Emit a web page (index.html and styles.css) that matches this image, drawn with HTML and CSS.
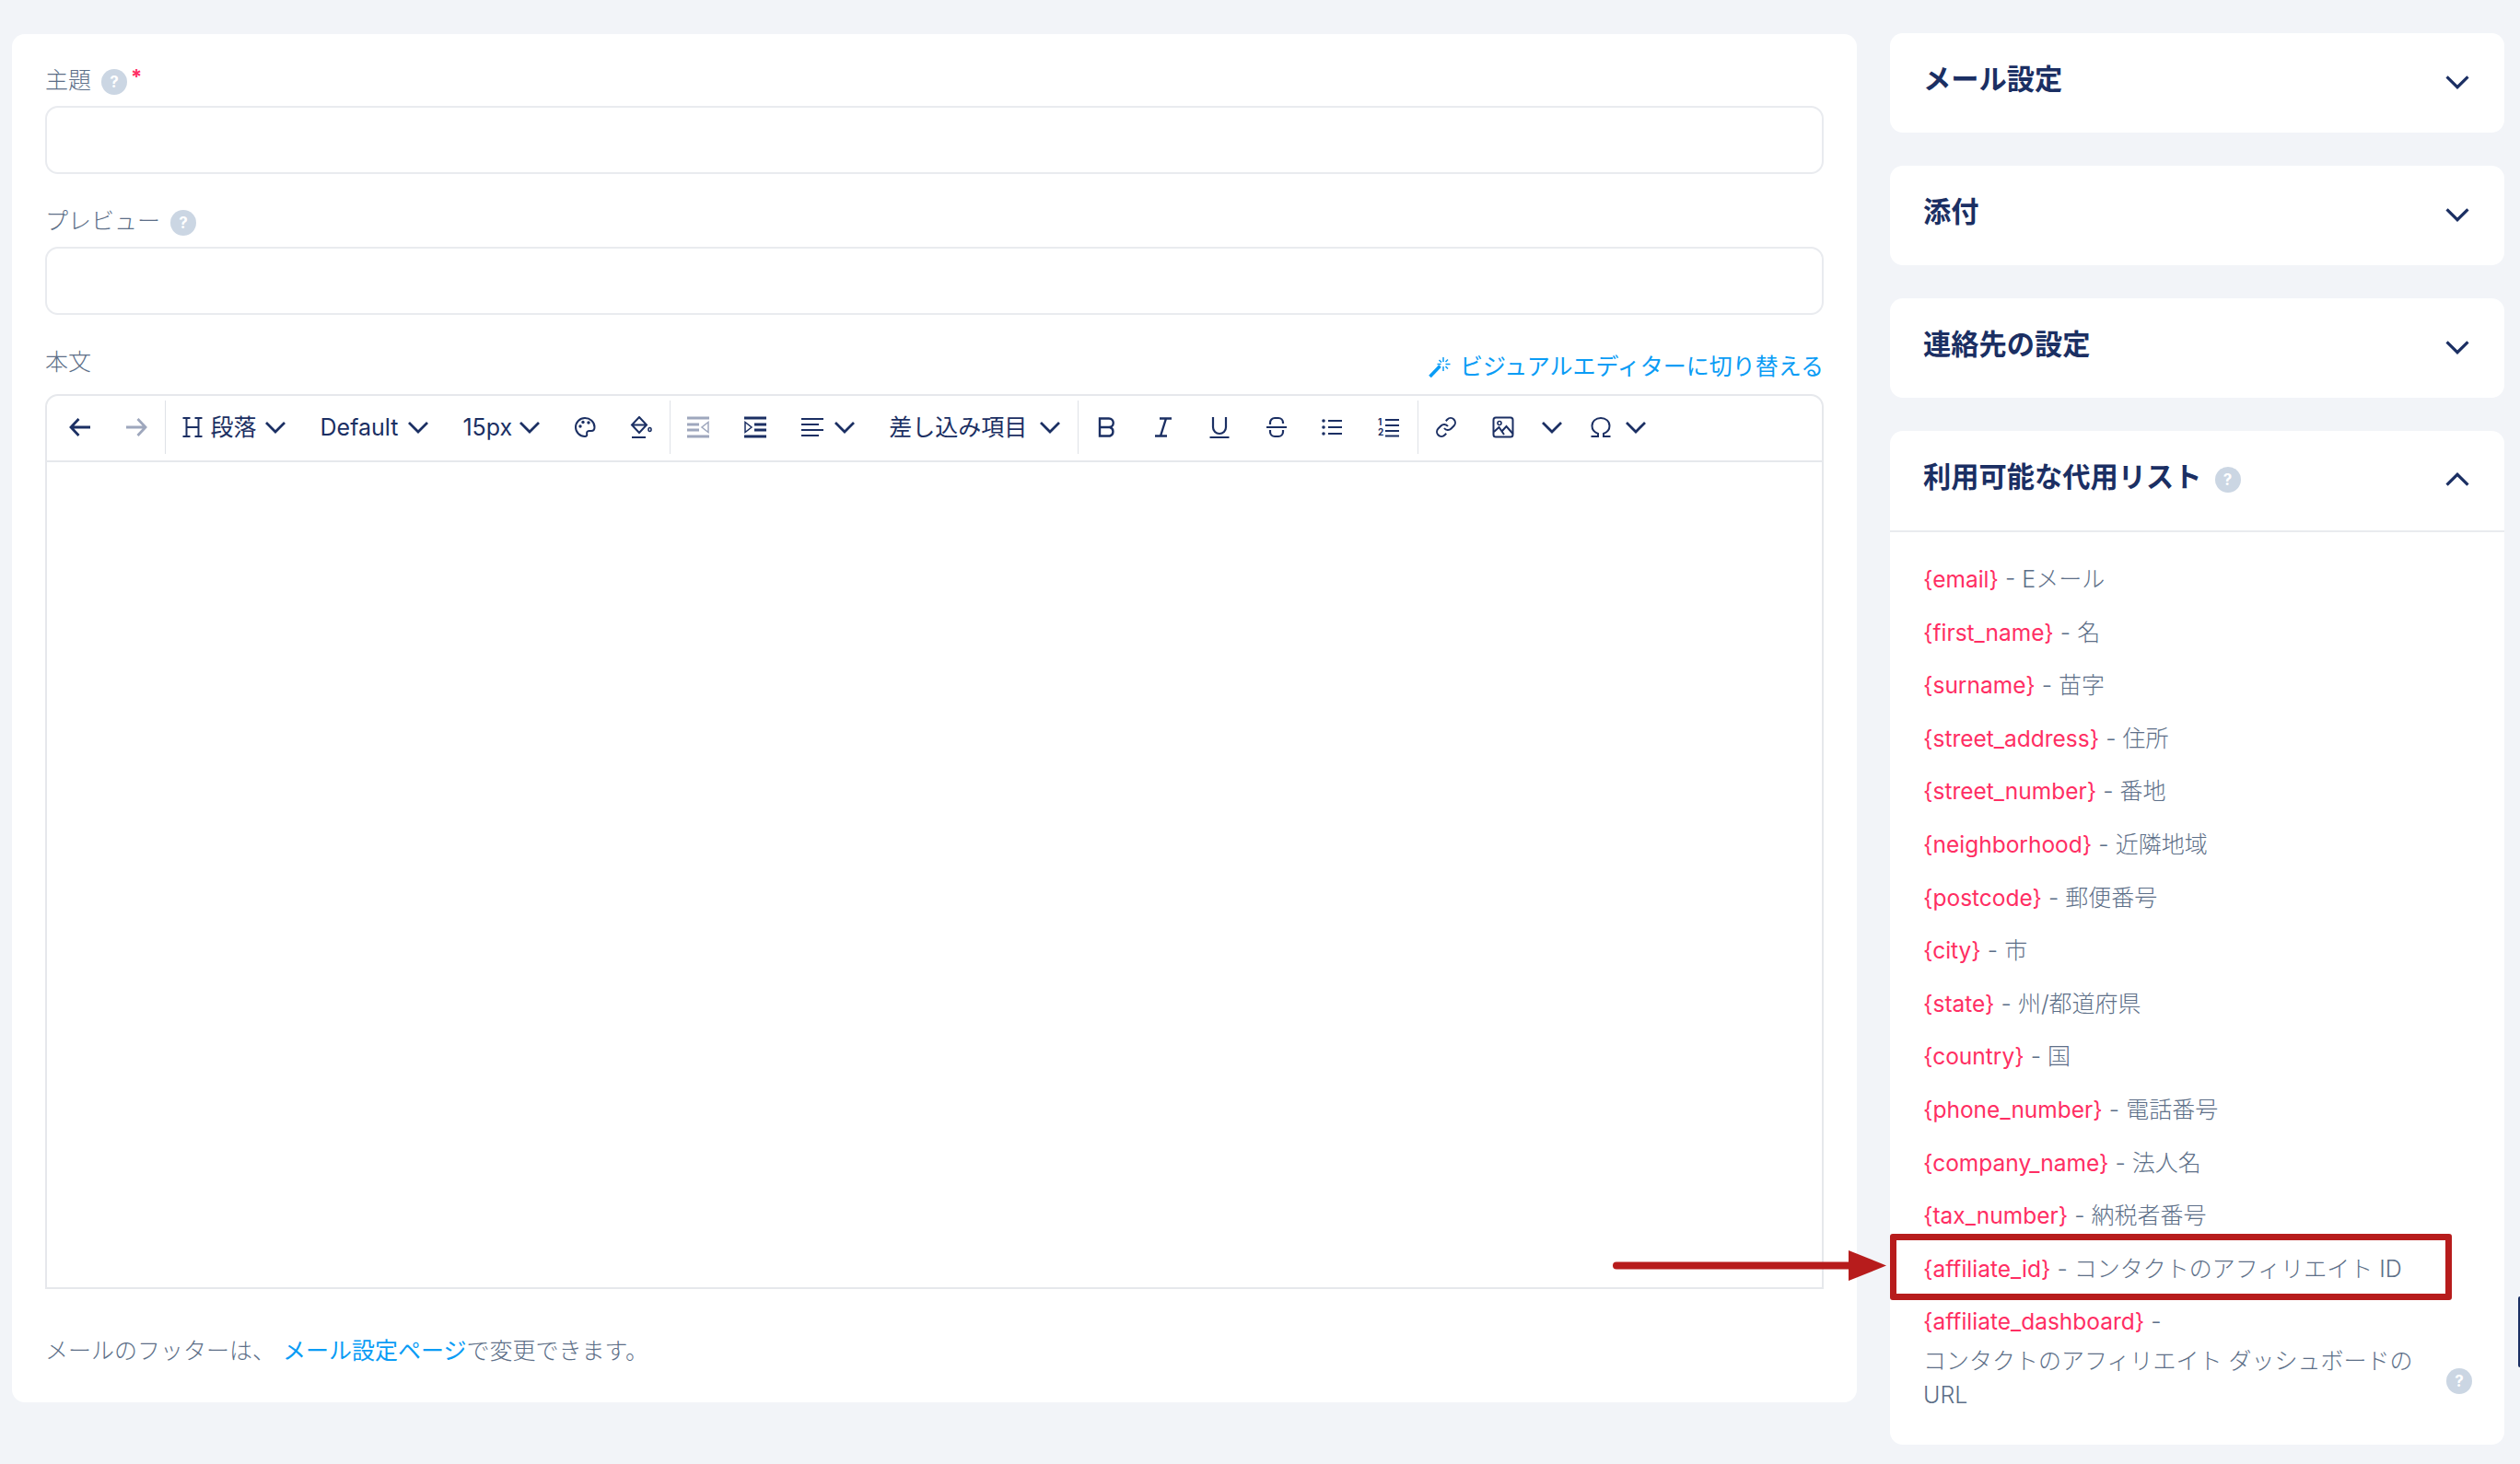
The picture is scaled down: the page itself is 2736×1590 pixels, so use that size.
FILE: index.html
```html
<!DOCTYPE html>
<html lang="ja">
<head>
  <meta charset="UTF-8">
  <title>メール設定</title>
  <link rel="stylesheet" href="styles.css">
</head>
<body>
  <div class="page">
    <main class="main-card">
      <div class="field-label">主題 <span class="help">?</span><span class="required">*</span></div>
      <input class="text-input" type="text">

      <div class="field-label spaced">プレビュー <span class="help">?</span></div>
      <input class="text-input" type="text">

      <div class="body-head">
        <div class="field-label">本文</div>
        <a class="switch-link" href="#">
          <svg class="wand" viewBox="0 0 25 23"><path d="M1.500 22L12.500 10.500" stroke-width="3.600"/><path d="M16 1v5M16 11v5M9.500 8.500h4M18.500 8.500h5M11.500 4l2.500 2.500M21 3.500L18.500 6M18.500 11l2.500 2.500" stroke-width="1.500"/></svg>
          ビジュアルエディターに切り替える
        </a>
      </div>

      <div class="editor">
        <div class="toolbar">
          <button class="tool"><svg class="ico" viewBox="0 0 24 24"><path d="M23 12H2M10.500 3L2 12l8.500 9"/></svg></button>
          <button class="tool muted"><svg class="ico" viewBox="0 0 24 24"><path d="M1 12h21M13.500 3l8.500 9-8.500 9"/></svg></button>
          <span class="sep"></span>
          <button class="menu first">
            <svg class="ico" viewBox="0 0 24 24"><path d="M5.500 2v20M18.500 2v20M5.500 12h13M1.500 2h8M14.500 2h8M1.500 22h8M14.500 22h8" stroke-width="2"/></svg>
            <span class="menu-text">段落</span>
            <svg class="chev" viewBox="0 0 24 14"><path d="M2 2l10 10L22 2"/></svg>
          </button>
          <button class="menu"><span class="menu-text">Default</span><svg class="chev" viewBox="0 0 24 14"><path d="M2 2l10 10L22 2"/></svg></button>
          <button class="menu size"><span class="menu-text">15px</span><svg class="chev" viewBox="0 0 24 14"><path d="M2 2l10 10L22 2"/></svg></button>
          <button class="tool"><svg class="ico" viewBox="0 0 24 24"><path d="M12 2a10 10 0 0 0 0 20c2 0 2.500-1.300 2.200-2.600-.4-1.700.3-3.400 2.200-3.400h2.600c2.300 0 3.500-1.500 3.500-4C22.500 6 17.500 2 12 2z" stroke-width="2"/><circle class="dot" cx="7" cy="11" r="1.700"/><circle class="dot" cx="10" cy="6.500" r="1.700"/><circle class="dot" cx="16" cy="7" r="1.700"/></svg></button>
          <button class="tool"><svg class="ico" viewBox="0 0 24 24"><path d="M10 1l8 8.500-8 8.500-8-8.500zM2 9.500h16M2 23h15" stroke-width="2"/><ellipse cx="21.500" cy="14.500" rx="1.500" ry="2" stroke-width="1.600"/></svg></button>
          <span class="sep"></span>
          <button class="tool muted"><svg class="ico" viewBox="0 0 24 24"><path d="M0 2h24M0 22h24M0 9h13M0 15h13"/><path class="solid" d="M23 6.500v11L16 12z" stroke-width="1.500"/></svg></button>
          <button class="tool"><svg class="ico" viewBox="0 0 24 24"><path d="M0 2h24M0 22h24M11 9h13M11 15h13"/><path class="solid" d="M1 6.500v11L8 12z" stroke-width="1.500"/></svg></button>
          <button class="menu align">
            <svg class="ico" viewBox="0 0 24 24"><path d="M0 3h24M0 9h19M0 15h24M0 21h19" stroke-width="1.800"/></svg>
            <svg class="chev" viewBox="0 0 24 14"><path d="M2 2l10 10L22 2"/></svg>
          </button>
          <button class="menu wide"><span class="menu-text">差し込み項目</span><svg class="chev" viewBox="0 0 24 14"><path d="M2 2l10 10L22 2"/></svg></button>
          <span class="sep"></span>
          <button class="tool"><svg class="ico" viewBox="0 0 24 24"><path d="M4 2.500h10a4.700 4.700 0 0 1 0 9.500H4zM4 12h11a5 5 0 0 1 0 9.500H4z" stroke-width="2.400"/></svg></button>
          <button class="tool"><svg class="ico" viewBox="0 0 24 24"><path d="M8 2.500h13M3 21.500h13M15 2.500L9 21.500" stroke-width="2.400"/></svg></button>
          <button class="tool"><svg class="ico" viewBox="0 0 24 24"><path d="M5 1v11a7 7 0 0 0 14 0V1M1.500 23h21" stroke-width="2.200"/></svg></button>
          <button class="tool"><svg class="ico" viewBox="0 0 24 24"><path d="M1 12h22M5 9V7a5 5 0 0 1 5-5h4a5 5 0 0 1 5 5v1M5 15v2a5 5 0 0 0 5 5h4a5 5 0 0 0 5-5v-2" stroke-width="2.200"/></svg></button>
          <button class="tool"><svg class="ico" viewBox="0 0 24 24"><path d="M7 5h15M7 12h15M7 19h15" stroke-width="1.800"/><circle class="dot" cx="2" cy="5" r="1.800"/><circle class="dot" cx="2" cy="12" r="1.800"/><circle class="dot" cx="2" cy="19" r="1.800"/></svg></button>
          <button class="tool"><svg class="ico" viewBox="0 0 24 24"><path d="M8 4h15M8 10h15M8 16h15M8 21.500h15" stroke-width="1.800"/><text class="num" x="0" y="10">1</text><text class="num" x="0" y="21">2</text></svg></button>
          <span class="sep"></span>
          <button class="tool"><svg class="ico" viewBox="0 0 24 24"><path d="M10 13a5 5 0 0 0 7.540.540l3-3a5 5 0 0 0-7.070-7.070l-1.720 1.710M14 11a5 5 0 0 0-7.540-.540l-3 3a5 5 0 0 0 7.070 7.070l1.710-1.710" stroke-width="2"/></svg></button>
          <button class="tool"><svg class="ico" viewBox="0 0 24 24"><rect x="1.500" y="1.500" width="21" height="21" rx="2.500" stroke-width="2"/><circle cx="8" cy="7.500" r="2" stroke-width="1.600"/><path d="M2 17l5.500-5 5.500 8M10.500 16.500l5-5.500 7 8" stroke-width="2"/></svg></button>
          <button class="tool-chev"><svg class="chev" viewBox="0 0 24 14"><path d="M2 2l10 10L22 2"/></svg></button>
          <button class="menu omega">
            <svg class="ico small" viewBox="0 0 24 24"><path d="M1.500 22H9v-3C5 17.500 2.500 14 2.500 10.500 2.500 5.500 6.500 2 12 2s9.500 3.500 9.500 8.500c0 3.500-2.500 7-6.500 8.500v3h7.500" stroke-width="2"/></svg>
            <svg class="chev" viewBox="0 0 24 14"><path d="M2 2l10 10L22 2"/></svg>
          </button>
        </div>
        <div class="editor-area"></div>
      </div>

      <p class="footer-note">メールのフッターは、 <a href="#">メール設定ページ</a>で変更できます。</p>
    </main>

    <aside class="side">
      <section class="side-card">
        <header class="side-head"><h3>メール設定</h3><svg class="chev head-chev" viewBox="0 0 24 14"><path d="M2 2l10 10L22 2"/></svg></header>
      </section>
      <section class="side-card">
        <header class="side-head"><h3>添付</h3><svg class="chev head-chev" viewBox="0 0 24 14"><path d="M2 2l10 10L22 2"/></svg></header>
      </section>
      <section class="side-card">
        <header class="side-head"><h3>連絡先の設定</h3><svg class="chev head-chev" viewBox="0 0 24 14"><path d="M2 2l10 10L22 2"/></svg></header>
      </section>
      <section class="side-card">
        <header class="side-head open"><h3>利用可能な代用リスト <span class="help">?</span></h3><svg class="chev head-chev" viewBox="0 0 24 14"><path d="M2 12L12 2l10 10"/></svg></header>
        <ul class="tags">
          <li><code>{email}</code> - Eメール</li>
          <li><code>{first_name}</code> - 名</li>
          <li><code>{surname}</code> - 苗字</li>
          <li><code>{street_address}</code> - 住所</li>
          <li><code>{street_number}</code> - 番地</li>
          <li><code>{neighborhood}</code> - 近隣地域</li>
          <li><code>{postcode}</code> - 郵便番号</li>
          <li><code>{city}</code> - 市</li>
          <li><code>{state}</code> - 州/都道府県</li>
          <li><code>{country}</code> - 国</li>
          <li><code>{phone_number}</code> - 電話番号</li>
          <li><code>{company_name}</code> - 法人名</li>
          <li><code>{tax_number}</code> - 納税者番号</li>
          <li><code>{affiliate_id}</code> - コンタクトのアフィリエイト ID</li>
          <li class="tag-long">
            <div class="tag-text"><code>{affiliate_dashboard}</code> - <span class="tag-desc">コンタクトのアフィリエイト ダッシュボードの URL</span></div>
            <span class="help">?</span>
          </li>
        </ul>
      </section>
    </aside>

    <!-- annotation drawn on top of the screenshot -->
    <div class="mark-box"></div>
    <svg class="mark-arrow" viewBox="0 0 297 33"><path d="M4 16.500H258" stroke-width="8" stroke-linecap="round"/><path class="head" d="M256 0l41 16.500L256 33z"/></svg>
    <div class="edge-tab"></div>
  </div>
</body>
</html>
```

FILE: styles.css
```css
* {
  margin: 0;
  padding: 0;
  box-sizing: border-box;
}

html, body {
  height: 100%;
  overflow: hidden;
}

body {
  font-family: Inter, 'Noto Sans CJK JP', sans-serif;
  font-size: 25px;
  line-height: 38.5px;
  font-weight: 300;
  color: #5d6f88;
  background-color: #f2f4f8;
}

a {
  color: #0a9cf5;
  text-decoration: none;
}

.page {
  position: relative;
  display: flex;
  align-items: flex-start;
  gap: 36px;
  height: 1590px;
  padding: 37px 17px 0 13px;
}

/* left card */

.main-card {
  width: 2003px;
  padding: 30px 36px 36px 36px;
  background-color: #fff;
  border-radius: 14px;
}

.field-label {
  display: flex;
  align-items: center;
  gap: 11px;
  height: 40px;
  line-height: 40px;
}

.field-label.spaced {
  margin-top: 31px;
}

.field-label .help {
  margin-top: 3px;
}

.help {
  display: inline-block;
  flex: none;
  width: 28px;
  height: 28px;
  border-radius: 50%;
  background-color: #cbd6e3;
  color: #fff;
  font-size: 17px;
  font-weight: 700;
  line-height: 28px;
  text-align: center;
}

.required {
  margin: -8px 0 0 -7px;
  color: #ff2e63;
  font-size: 22px;
  font-weight: 700;
}

.text-input {
  display: block;
  width: 100%;
  height: 74px;
  margin-top: 8px;
  border: 2px solid #e9ebef;
  border-radius: 14px;
  background-color: #fff;
}

.body-head {
  display: flex;
  justify-content: space-between;
  margin-top: 31px;
}

.switch-link {
  display: flex;
  align-items: center;
  gap: 9px;
  align-self: flex-end;
  height: 30px;
  font-weight: 400;
}

.wand {
  width: 25px;
  height: 23px;
  fill: none;
  stroke: #0a9cf5;
}

.editor {
  display: flex;
  flex-direction: column;
  height: 972px;
  margin-top: 15px;
  border: 2px solid #e6e8ec;
  border-radius: 14px 14px 0 0;
}

.toolbar {
  display: flex;
  align-items: center;
  height: 72px;
  padding: 0 0 2px 5px;
  border-bottom: 2px solid #e6e8ec;
  color: #1b2f63;
}

.toolbar button {
  display: flex;
  align-items: center;
  justify-content: center;
  flex: none;
  height: 58px;
  border: none;
  background: none;
  font: inherit;
  color: inherit;
}

.tool {
  width: 61.25px;
}

.tool.muted {
  opacity: 0.42;
}

.menu {
  gap: 10px;
  padding: 0 18px;
}

.menu.first {
  gap: 8px;
  padding-left: 17px;
  padding-right: 19px;
}

.menu.size {
  gap: 7px;
  padding-right: 17px;
}

.menu.align {
  gap: 11px;
  margin-left: 2px;
}

.menu.wide {
  gap: 13px;
}

.menu.omega {
  gap: 14px;
  padding: 0 0 0 19px;
}

.tool-chev {
  width: 45px;
}

.menu-text {
  font-weight: 400;
  white-space: nowrap;
}

.sep {
  flex: none;
  width: 1px;
  height: 58px;
  background-color: #dfe2e7;
}

.ico {
  width: 24px;
  height: 24px;
  fill: none;
  stroke: currentColor;
  stroke-width: 2.800;
}

.ico .dot {
  fill: currentColor;
  stroke: none;
}

.ico .num {
  font-family: Inter, sans-serif;
  font-size: 10px;
  font-weight: 700;
  fill: currentColor;
  stroke: none;
}

.chev {
  flex: none;
  width: 24px;
  height: 14px;
  fill: none;
  stroke: #1b2f63;
  stroke-width: 2.800;
}

.editor-area {
  flex: 1;
}

.footer-note {
  margin-top: 47px;
  line-height: 40px;
}

.footer-note a {
  margin-left: 1px;
  font-weight: 400;
}

/* right column */

.side {
  display: flex;
  flex-direction: column;
  gap: 36px;
  width: 667px;
  margin-top: -1px;
}

.side-card {
  background-color: #fff;
  border-radius: 14px;
}

.side-head {
  display: flex;
  align-items: center;
  justify-content: space-between;
  height: 108px;
  padding: 0 36px;
}

.side-head.open {
  height: 110px;
  border-bottom: 2px solid #e9ebef;
}

.side-head h3 {
  display: flex;
  align-items: center;
  gap: 14px;
  margin-bottom: 7px;
  font-size: 30.250px;
  font-weight: 700;
  color: #1b2f63;
}

.side-head h3 .help {
  margin-top: 5px;
}

.head-chev {
  width: 28px;
  height: 16px;
  margin: 0 1px 2px 0;
}

.tags {
  padding: 32px 36px 35px;
  list-style: none;
}

.tags li {
  margin-bottom: 19.100px;
}

.tags li:last-child {
  margin-bottom: 0;
}

.tags code {
  font-family: inherit;
  font-size: 24.500px;
  font-weight: 400;
  color: #ff2e63;
}

.tag-long {
  display: flex;
  align-items: flex-end;
  gap: 14px;
  margin-right: -1px;
}

.tag-long .help {
  margin-bottom: 20px;
}

.tag-desc {
  display: block;
  margin-top: 5px;
  line-height: 37px;
}

/* annotation */

.mark-box {
  position: absolute;
  left: 2052px;
  top: 1340px;
  width: 610px;
  height: 72px;
  border: 7.500px solid #b71c1c;
  border-radius: 3px;
}

.mark-arrow {
  position: absolute;
  left: 1751px;
  top: 1358px;
  width: 297px;
  height: 33px;
  fill: none;
  stroke: #b71c1c;
}

.mark-arrow .head {
  fill: #b71c1c;
  stroke: none;
}

.edge-tab {
  position: absolute;
  right: 0;
  top: 1408px;
  width: 2px;
  height: 77px;
  border-radius: 2px 0 0 2px;
  background-color: #1b2f63;
}
```
